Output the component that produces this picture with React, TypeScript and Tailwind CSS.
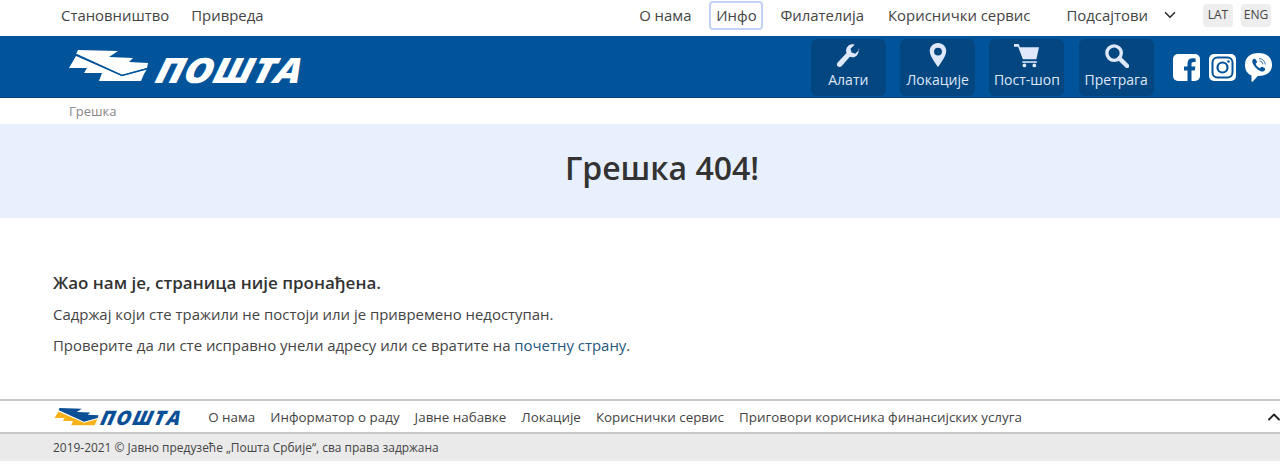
import React from "react";
import { ChevronDown, ChevronUp } from "lucide-react";

const Mark = ({ className, top, bottom, line }: { className: string; top: string; bottom: string; line: string }) => (
  <svg viewBox="0 0 81 32" className={className}>
    <polygon points="10,0 50,1 41,7 65,8 61,12 80,13 79,18 54,25 8,4" fill={top} />
    <polygon points="1,18 8,6 54,26 79,19 76,24 73,31 31,31 34,23 16,23 19,18" fill={bottom} />
    <path d="M7 4 L54 25.500 L80 18.500" stroke={line} strokeWidth="1.400" fill="none" />
  </svg>
);

const Tool = ({ label, children }: { label: string; children: React.ReactNode }) => (
  <div className="flex h-[57px] w-[75px] flex-col items-center rounded-md bg-[#034680] pt-[2px] text-[14px] leading-5 text-[#dfe8fb]">
    <div className="flex h-[28px] items-center">{children}</div>
    <span className="mt-[1px]">{label}</span>
  </div>
);

export default function App() {
  return (
    <div className="h-[471px] overflow-hidden bg-white font-['Open_Sans',sans-serif] text-[#444]">
      <div className="flex h-9 items-center pb-[6px] text-[14.9px]">
        <a className="ml-[61px]">Становништво</a>
        <a className="ml-[22px]">Привреда</a>
        <a className="ml-auto">О нама</a>
        <a className="ml-[18px] flex h-[29px] w-[54px] items-center justify-center rounded-sm border-2 border-[#c3d3f8]">Инфо</a>
        <a className="ml-[17px]">Филателија</a>
        <a className="ml-[24px]">Кориснички сервис</a>
        <a className="ml-[36px]">Подсајтови</a>
        <ChevronDown className="ml-[13px] h-[18px] w-[18px] text-[#333]" strokeWidth={2.2} />
        <span className="ml-[24px] flex h-[23px] w-[30px] items-center justify-center rounded bg-[#eee] text-[12px]">LAT</span>
        <span className="mr-[9px] ml-[8px] flex h-[23px] w-[30px] items-center justify-center rounded bg-[#eee] text-[12px]">ENG</span>
      </div>

      <div className="flex h-[62px] items-center border-b border-[#03457e] bg-[#02549a]">
        <div className="ml-[68px] flex items-center">
          <Mark className="mb-[2px] h-[32px] w-[81px]" top="#fff" bottom="#fff" line="#02549a" />
          <span className="mt-[6px] ml-[8px] inline-block origin-left -skew-x-12 scale-x-[1.13] text-[35px] leading-none font-extrabold text-white italic">ПОШТА</span>
        </div>
        <div className="ml-auto flex h-full items-start gap-[14.3px] pt-[3px]">
          <Tool label="Алати">
            <svg viewBox="0 0 24 24" className="h-[25px] w-[25px]" fill="#dfe8fb">
              <path d="M22.500 6.200l-4 4-3.600-1-1-3.600 4-4c-2.200-.7-4.800-.2-6.500 1.500-1.800 1.800-2.200 4.400-1.300 6.600L1.600 18.600c-1 1-1 2.700 0 3.700s2.700 1 3.700 0l8-9c2.200.9 4.800.5 6.600-1.300 1.700-1.700 2.300-4.500 1.600-6.800z" />
            </svg>
          </Tool>
          <Tool label="Локације">
            <svg viewBox="0 0 24 28" className="h-[26px] w-[22px]">
              <path fillRule="evenodd" fill="#dfe8fb" d="M12 1C6.500 1 3 5 3 10c0 6 9 17 9 17s9-11 9-17c0-5-3.500-9-9-9zm0 5a4.300 4.300 0 110 8.600A4.300 4.300 0 0112 6z" />
            </svg>
          </Tool>
          <Tool label="Пост-шоп">
            <svg viewBox="0 0 24 24" className="h-[25px] w-[25px]" fill="#dfe8fb">
              <path d="M0 1h4.500l1.200 3H24l-2.500 11.500H8.500L4 3.500H0z" />
              <path d="M8 17.500h14v1.500H8z" />
              <circle cx="10" cy="21.500" r="1.800" />
              <circle cx="19.500" cy="21.500" r="1.800" />
            </svg>
          </Tool>
          <Tool label="Претрага">
            <svg viewBox="0 0 26 26" className="h-[25px] w-[25px]" fill="none" stroke="#dfe8fb">
              <circle cx="10.500" cy="10.500" r="7.500" strokeWidth="3.500" />
              <path d="M16 16l8 8" strokeWidth="4.500" strokeLinecap="round" />
            </svg>
          </Tool>
          <div className="mr-[8px] ml-[5px] flex h-[57px] items-center gap-[9px]">
            <svg viewBox="0 0 27 27" className="h-[27px] w-[27px]">
              <rect width="27" height="27" rx="5" fill="#fff" />
              <path fill="#02549a" d="M18.500 27V16.500h3.300l.6-4h-3.900v-2.400c0-1.200.5-2 2.100-2h2V4.500c-.6-.1-1.900-.2-3-.2-3.100 0-5.100 1.800-5.100 5.200v3H11v4h3.500V27z" />
            </svg>
            <svg viewBox="0 0 27 27" className="h-[27px] w-[27px]">
              <rect width="27" height="27" rx="5" fill="#fff" />
              <rect x="3.500" y="3.500" width="20" height="20" rx="5" fill="none" stroke="#02549a" strokeWidth="2" />
              <circle cx="13.500" cy="13.500" r="5" fill="none" stroke="#02549a" strokeWidth="2.200" />
              <circle cx="19.500" cy="7.500" r="1.300" fill="#02549a" />
            </svg>
            <svg viewBox="0 0 27 29" className="h-[29px] w-[27px]">
              <path fill="#fff" d="M13.500 0C5.500 0 0 4 0 12c0 5 2 8.500 6.500 10.500V28c0 .8.700 1 1.300.4l5-5.400h.7C21.500 23 27 19 27 12 27 4 21.500 0 13.500 0z" />
              <path fill="#02549a" d="M8.500 6c1-.5 1.600-.3 2.200.6l1 1.500c.5.800.3 1.400-.2 1.900l-.9.7c.8 2.200 2.300 3.700 4.500 4.500l.8-.9c.5-.6 1.200-.8 1.900-.3l1.600 1.100c.9.600 1 1.300.4 2.200-1 1.400-2.300 1.600-4 .9-4-1.700-6.700-4.500-8.200-8.200-.6-1.700-.4-3 .9-4z" />
              <path d="M14 5.500c3.500.2 6 2.600 6.300 6M14.500 8c2 .2 3.200 1.400 3.400 3.300" stroke="#02549a" strokeWidth="0.800" fill="none" />
            </svg>
          </div>
        </div>
      </div>

      <div className="flex h-[26px] items-center pt-[2px] pl-[69px] text-[13px] text-[#888]">Грешка</div>

      <div className="flex h-[94px] items-center justify-center bg-[#e9f0fd] pb-[6px] pl-[44px]">
        <h1 className="text-[32px] font-semibold text-[#333]">Грешка 404!</h1>
      </div>

      <div className="h-[181px] pt-[53px] pl-[53px] text-[14.93px]">
        <h2 className="text-[17px] leading-6 font-semibold text-[#333]">Жао нам је, страница није пронађена.</h2>
        <p className="mt-[7px] leading-6">Садржај који сте тражили не постоји или је привремено недоступан.</p>
        <p className="mt-[7px] leading-6">
          Проверите да ли сте исправно унели адресу или се вратите на <a className="text-[#25587f]">почетну страну</a>.
        </p>
      </div>

      <div className="flex h-[35px] items-center border-y-2 border-[#c8c8c8] pt-[1px] pl-[54px] text-[13.4px]">
        <Mark className="h-[18px] w-[45px]" top="#0b5096" bottom="#f8b219" line="#fff" />
        <span className="mt-[1px] ml-[2px] inline-block -skew-x-12 text-[20px] leading-none font-extrabold tracking-[1.5px] text-[#0b5096] italic">ПОШТА</span>
        <a className="ml-[26px]">О нама</a>
        <a className="ml-[15px]">Информатор о раду</a>
        <a className="ml-[15px]">Јавне набавке</a>
        <a className="ml-[15px]">Локације</a>
        <a className="ml-[15px]">Кориснички сервис</a>
        <a className="ml-[15px]">Приговори корисника финансијских услуга</a>
        <ChevronUp className="mr-[-4px] ml-auto h-[20px] w-[20px] text-[#222]" strokeWidth={2.2} />
      </div>

      <div className="flex h-[27px] items-center bg-[#eaeaea] pl-[53px] text-[11.95px] text-[#444]">
        2019-2021 © Јавно предузеће „Пошта Србије“, сва права задржана
      </div>
    </div>
  );
}
